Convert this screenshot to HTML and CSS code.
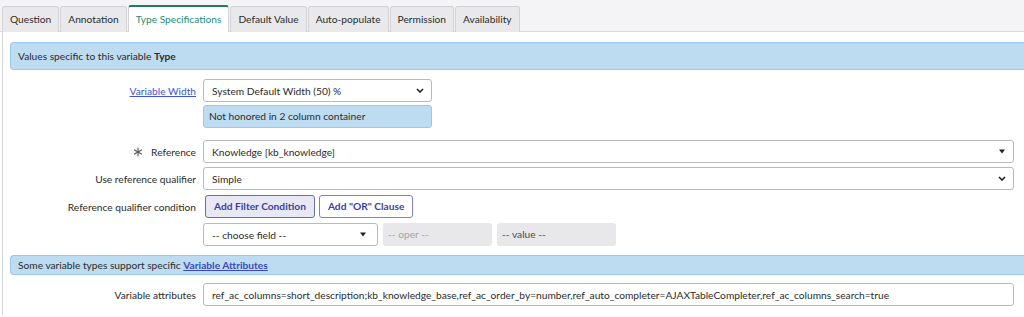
FILE: index.html
```html
<!DOCTYPE html>
<html>
<head>
<meta charset="utf-8">
<link rel="stylesheet" href="styles.css">
</head>
<body>
<div class="tabbar">
  <div class="tab">Question</div>
  <div class="tab">Annotation</div>
  <div class="tab active">Type Specifications</div>
  <div class="tab">Default Value</div>
  <div class="tab">Auto-populate</div>
  <div class="tab">Permission</div>
  <div class="tab">Availability</div>
</div>
<div class="panel">
  <div class="section-head">Values specific to this variable <b>Type</b></div>

  <div class="row r-width">
    <div class="label"><a class="link" href="#">Variable Width</a></div>
    <div class="field">
      <div class="select w228">
        <span>System Default Width (50) %</span>
        <svg class="chev" width="8" height="5" viewBox="0 0 8 5"><path d="M1 1 L4 4 L7 1" fill="none" stroke="#222" stroke-width="1.6"/></svg>
      </div>
      <div class="note">Not honored in 2 column container</div>
    </div>
  </div>

  <div class="row r-ref">
    <div class="label">
      <svg class="star" width="10" height="10" viewBox="0 0 10 10"><g stroke="#555" stroke-width="1.1"><path d="M5 0.5V9.5"/><path d="M1 2.7L9 7.3"/><path d="M1 7.3L9 2.7"/></g></svg>
      <span>Reference</span>
    </div>
    <div class="field">
      <div class="select full">
        <span>Knowledge [kb_knowledge]</span>
        <svg class="tri" width="8" height="5" viewBox="0 0 8 5"><path d="M1 0.5H7L4 4.5Z" fill="#222"/></svg>
      </div>
    </div>
  </div>

  <div class="row r-qual">
    <div class="label">Use reference qualifier</div>
    <div class="field">
      <div class="select full">
        <span>Simple</span>
        <svg class="chev" width="8" height="5" viewBox="0 0 8 5"><path d="M1 1 L4 4 L7 1" fill="none" stroke="#222" stroke-width="1.6"/></svg>
      </div>
    </div>
  </div>

  <div class="row r-cond">
    <div class="label">Reference qualifier condition</div>
    <div class="field">
      <div class="btns">
        <div class="btn primary">Add Filter Condition</div>
        <div class="btn">Add "OR" Clause</div>
      </div>
      <div class="filter">
        <div class="select choose">
          <span>-- choose field --</span>
          <svg class="tri" width="8" height="5" viewBox="0 0 8 5"><path d="M1 0.5H7L4 4.5Z" fill="#222"/></svg>
        </div>
        <div class="disabled oper">-- oper --</div>
        <div class="disabled value">-- value --</div>
      </div>
    </div>
  </div>

  <div class="section-head small">Some variable types support specific <a class="link strong" href="#">Variable Attributes</a></div>

  <div class="row r-attr">
    <div class="label">Variable attributes</div>
    <div class="field">
      <div class="input full">ref_ac_columns=short_description;kb_knowledge_base,ref_ac_order_by=number,ref_auto_completer=AJAXTableCompleter,ref_ac_columns_search=true</div>
    </div>
  </div>
</div>
</body>
</html>
```

FILE: styles.css
```css
html, body {
  margin: 0;
  padding: 0;
  background: #ffffff;
}
body {
  font-family: Lato, "Open Sans", Arial, sans-serif;
  font-size: 10.2px;
  color: #2b2b2b;
  width: 1024px;
  height: 317px;
  overflow: hidden;
}
.tabbar {
  display: flex;
  align-items: flex-end;
  height: 31px;
  background: #f4f4f6;
  border-bottom: 1px solid #d9d9de;
  padding-left: 2px;
  box-sizing: content-box;
}
.tab {
  height: 25px;
  line-height: 25px;
  padding: 0 7px;
  background: #e9e9ec;
  border: 1px solid #d2d2d6;
  border-bottom: none;
  border-radius: 3px 3px 0 0;
  margin-right: 1px;
  color: #2b2b2b;
  white-space: nowrap;
  position: relative;
  top: 1px;
}
.tab.active {
  background: #ffffff;
  color: #278c73;
  border-top: 2px solid #1f7a62;
  height: 25px;
  line-height: 24px;
}
.panel {
  margin-left: 2px;
  border-left: 1px solid #d4d4d8;
  padding: 10px 0 9px 7px;
}
.section-head {
  height: 26px;
  line-height: 26px;
  background: #bedcf1;
  border: 1px solid #98c9ea;
  border-right: none;
  border-radius: 4px 0 0 4px;
  padding-left: 7px;
}
.section-head b { font-weight: 700; }
.section-head.small {
  height: 18px;
  line-height: 18px;
  margin-top: 9px;
}
.row {
  display: flex;
  gap: 7px;
  padding-right: 10px;
}
.label {
  width: 186px;
  flex: none;
  text-align: right;
  display: flex;
  justify-content: flex-end;
  align-items: center;
  height: 23px;
  white-space: nowrap;
}
.link {
  color: #4252d6;
  text-decoration: underline;
}
.link.strong {
  font-weight: 700;
  color: #3a4ab8;
}
.field {
  flex: 1;
  display: flex;
  flex-direction: column;
  align-items: flex-start;
}
.select, .input {
  box-sizing: border-box;
  height: 23px;
  border: 1px solid #b9b9bf;
  border-radius: 3px;
  background: #fff;
  display: flex;
  align-items: center;
  justify-content: space-between;
  padding: 0 7px 0 8px;
  white-space: nowrap;
}
.select.full, .input.full { width: 100%; }
.w228 { width: 229px; }
.note {
  box-sizing: border-box;
  width: 229px;
  height: 23px;
  line-height: 21px;
  margin-top: 3px;
  background: #bedcf1;
  border: 1px solid #98c9ea;
  border-radius: 3px;
  padding-left: 5px;
}
.r-width { margin-top: 9px; }
.r-ref { margin-top: 12px; }
.r-qual { margin-top: 4px; }
.r-cond { margin-top: 5px; }
.r-attr { margin-top: 8px; }
.star { margin-right: 8px; }
.btns {
  display: flex;
  gap: 4px;
  margin-left: 2px;
}
.btn {
  box-sizing: border-box;
  height: 23px;
  line-height: 21px;
  padding: 0 8px;
  border: 1px solid #7e82c8;
  border-radius: 3px;
  background: #fff;
  color: #3c3fa0;
  font-weight: 700;
  white-space: nowrap;
}
.btn.primary {
  background: #e7e8f4;
  border-color: #6b6f99;
}
.filter {
  display: flex;
  gap: 5px;
  margin-top: 5px;
}
.select.choose { width: 175px; padding-right: 10px; }
.disabled {
  box-sizing: border-box;
  height: 23px;
  line-height: 23px;
  background: #e8e8eb;
  border-radius: 3px;
  padding-left: 5px;
  color: #a3a3a8;
}
.disabled.oper { width: 109px; }
.disabled.value { width: 119px; color: #4a4a4a; }
.input { justify-content: flex-start; }
```
